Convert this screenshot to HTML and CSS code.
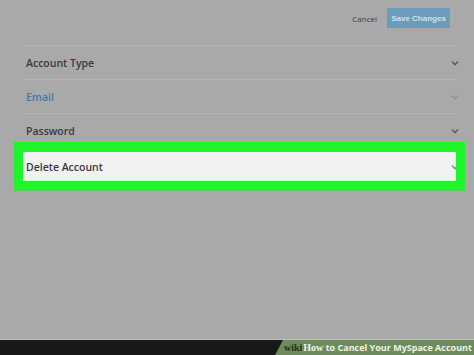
FILE: index.html
```html
<!DOCTYPE html>
<html lang="en">
<head>
    <meta charset="UTF-8">
    <title>Account Settings</title>
    <link rel="stylesheet" href="styles.css">
</head>
<body>
    <div class="screen">
        <div class="actions">
            <span class="cancel">Cancel</span>
            <button class="save">Save Changes</button>
        </div>

        <div class="settings">
            <div class="row">
                <span>Account Type</span>
                <svg class="chev" viewBox="0 0 8 6"><path d="M1 1.5 L4 4.5 L7 1.5"/></svg>
            </div>
            <div class="row email">
                <span>Email</span>
                <svg class="chev light" viewBox="0 0 8 6"><path d="M1 1.5 L4 4.5 L7 1.5"/></svg>
            </div>
            <div class="row">
                <span>Password</span>
                <svg class="chev" viewBox="0 0 8 6"><path d="M1 1.5 L4 4.5 L7 1.5"/></svg>
            </div>
            <div class="highlight">
                <div class="row delete">
                    <span>Delete Account</span>
                    <svg class="chev cut" viewBox="0 0 8 6"><path d="M1 1.5 L4 4.5 L7 1.5"/></svg>
                </div>
            </div>
        </div>
    </div>

    <footer class="banner">
        <div class="black"></div>
        <div class="title">
            <span class="wiki">wiki</span><span class="how">How</span> to Cancel Your MySpace Account
        </div>
    </footer>
</body>
</html>
```

FILE: styles.css
```css
body {
    margin: 0;
    width: 474px;
    height: 355px;
    overflow: hidden;
    background-color: #a9a9a9;
    font-family: "Open Sans", "Liberation Sans", sans-serif;
    display: flex;
    flex-direction: column;
}

.screen {
    flex: 1;
    padding: 0 16px 0 24px;
    border-bottom: 1px solid #bdbdbd;
}

.actions {
    display: flex;
    justify-content: flex-end;
    align-items: center;
    gap: 10px;
    height: 36px;
    padding-right: 8px;
}

.cancel {
    font-size: 8px;
    color: #3d3d3d;
}

.save {
    background-color: #6c9cbc;
    color: #cfe0ea;
    font-family: "Liberation Sans", sans-serif;
    font-weight: bold;
    font-size: 8px;
    white-space: nowrap;
    border: none;
    padding: 0;
    height: 20px;
    width: 63px;
}

.settings {
    border-top: 1px solid #b6b6b6;
    margin-top: 9px;
}

.settings > .row {
    border-bottom: 1px solid #b6b6b6;
}

.row {
    display: flex;
    align-items: center;
    justify-content: space-between;
    height: 33px;
    padding-left: 2px;
    font-size: 10.5px;
    font-weight: 600;
    color: #3a3a3a;
}

.row.email {
    color: #3f7cab;
}

.chev {
    width: 8px;
    height: 6px;
    margin-right: -1px;
    fill: none;
    stroke: #5e5e5e;
    stroke-width: 1.6;
}

.chev.light {
    stroke: #949494;
}

.highlight {
    margin: -6px -7px 0 -10px;
    border: 9px solid #1ef52b;
    border-top-width: 10px;
    border-bottom-width: 10px;
}

.row.delete {
    background-color: #f2f2f2;
    height: 29px;
    padding-left: 3px;
    border: none;
    overflow: hidden;
}

.chev.cut {
    margin-right: -3px;
    stroke: #8a8a8a;
}

.banner {
    height: 15px;
    display: flex;
    background-color: #6f8a5c;
}

.black {
    width: 283px;
    background-color: #181818;
    clip-path: polygon(0 0, 100% 0, 97.2% 100%, 0 100%);
    margin-right: -8px;
}

.title {
    flex: 1;
    padding-left: 9px;
    color: #eef2ea;
    font-size: 9px;
    font-weight: bold;
    line-height: 15px;
    white-space: nowrap;
}

.wiki {
    font-family: "Liberation Serif", serif;
    color: #223018;
    font-size: 10px;
}

.how {
    font-family: "Liberation Serif", serif;
    font-size: 10px;
    margin-left: 1px;
}
```
